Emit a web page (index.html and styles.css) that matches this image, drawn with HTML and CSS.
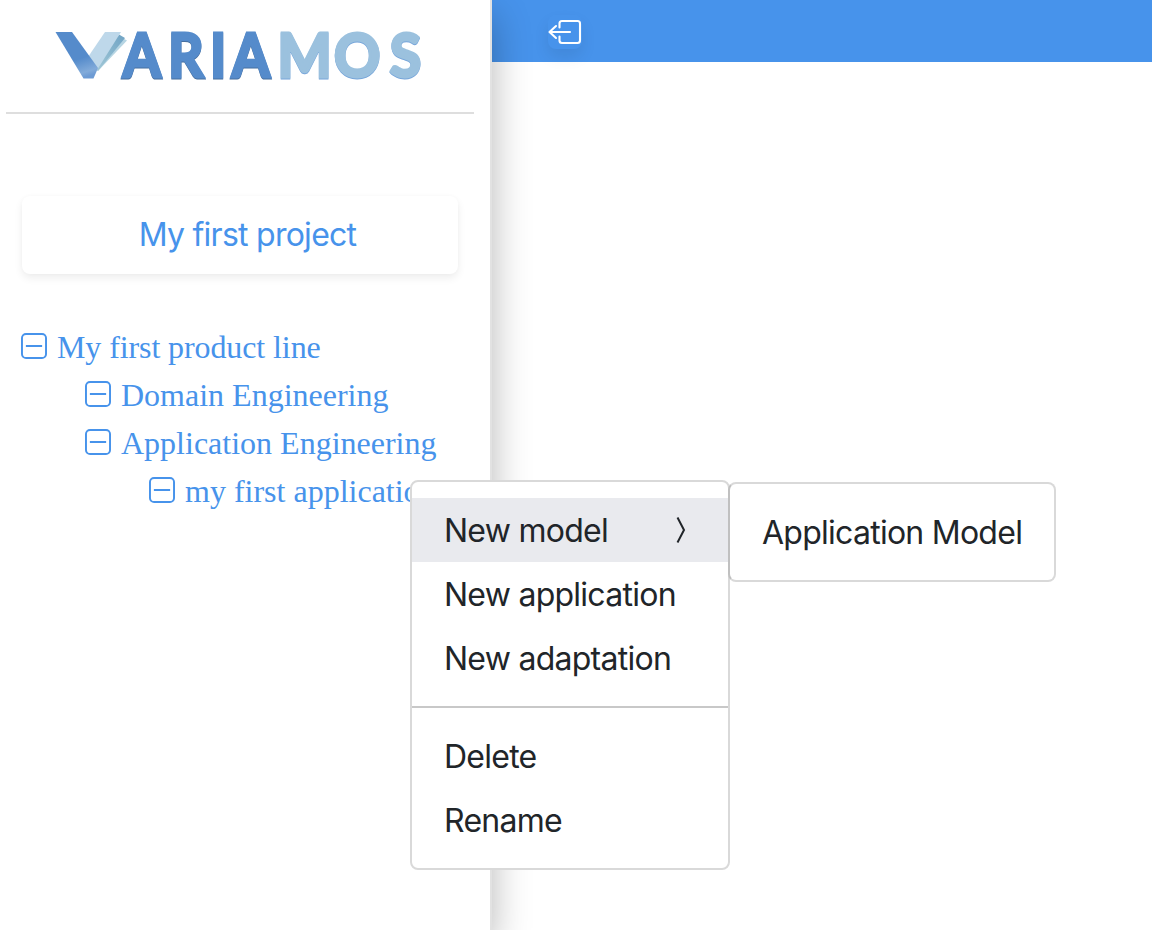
FILE: index.html
```html
<!DOCTYPE html>
<html lang="en">
<head>
<meta charset="utf-8">
<title>VariaMos</title>
<link rel="stylesheet" href="styles.css">
</head>
<body>
<div class="app">
  <aside class="sidebar">
    <div class="brand">
      <svg class="logo" width="380" height="80" viewBox="50 15 380 80" role="img" aria-label="VariaMos">
        <defs>
          <linearGradient id="stem" x1=".3" y1="0" x2=".6" y2="1">
            <stop offset=".6" stop-color="#558bcb"/>
            <stop offset=".9" stop-color="#82abda"/>
            <stop offset="1" stop-color="#6d9bd4"/>
          </linearGradient>
          <linearGradient id="fold" x1="1" y1="0" x2="0" y2="1">
            <stop offset="0" stop-color="#6fa3c4"/>
            <stop offset="1" stop-color="#a5cbd8"/>
          </linearGradient>
        </defs>
        <path d="M119 36L127 40.500L98 71L93 68Z" fill="#b6d5e3"/>
        <path d="M119 34.500L125 38L98 71L93 66Z" fill="url(#fold)"/>
        <path d="M105 32H121L97 70L88 57Z" fill="#bed8ea"/>
        <path d="M55.500 32H72L98 68L93.500 78.500H83.500Z" fill="url(#stem)"/>
        <g class="wordmark">
          <g transform="translate(122.800) scale(.9 1)">
            <text class="dark edge-dark" y="78" x="0 50.500 97 121">ARIA</text>
            <text class="dark" y="76.700" x="0 50.500 97 121" aria-hidden="true">ARIA</text>
          </g>
          <g transform="translate(277.500) scale(.94 1)">
            <text class="light edge-light" y="78" x="0 60 119.500">MOS</text>
            <text class="light" y="76.700" x="0 60 119.500" aria-hidden="true">MOS</text>
          </g>
        </g>
      </svg>
    </div>
    <div class="project">My first project</div>
    <ul class="tree">
      <li class="node root"><svg class="toggle" viewBox="0 0 16 16"><rect x=".6" y=".6" width="14.800" height="14.800" rx="2.500"/><path d="M3 8H13"/></svg><span>My first product line</span></li>
      <li class="node level-1"><svg class="toggle" viewBox="0 0 16 16"><rect x=".6" y=".6" width="14.800" height="14.800" rx="2.500"/><path d="M3 8H13"/></svg><span>Domain Engineering</span></li>
      <li class="node level-1"><svg class="toggle" viewBox="0 0 16 16"><rect x=".6" y=".6" width="14.800" height="14.800" rx="2.500"/><path d="M3 8H13"/></svg><span>Application Engineering</span></li>
      <li class="node level-2"><svg class="toggle" viewBox="0 0 16 16"><rect x=".6" y=".6" width="14.800" height="14.800" rx="2.500"/><path d="M3 8H13"/></svg><span>my first application</span></li>
    </ul>
  </aside>
  <main class="main">
    <header class="topbar">
      <span class="exit"><svg width="34" height="28" viewBox="0 0 34 28"><path d="M11.500 9.500V5.500Q11.500 3 14 3H29.500Q32 3 32 5.500V22.500Q32 25 29.500 25H14Q11.500 25 11.500 22.500V18.500M22 14H1.500M8 8L1.500 14L8 20"/></svg></span>
    </header>
  </main>
</div>
<nav class="menu">
  <div class="item active"><span>New model</span><svg class="chevron" width="10" height="28" viewBox="0 0 10 28"><path d="M1.500 1.500L8 14L1.500 26.500"/></svg></div>
  <div class="item"><span>New application</span></div>
  <div class="item"><span>New adaptation</span></div>
  <hr class="divider">
  <div class="item"><span>Delete</span></div>
  <div class="item"><span>Rename</span></div>
</nav>
<nav class="menu submenu">
  <div class="item"><span>Application Model</span></div>
</nav>
</body>
</html>
```

FILE: styles.css
```css
* { box-sizing: border-box; }
body {
  margin: 0;
  overflow: hidden;
  background: #fff;
  color: #212529;
  font-family: Inter, "Liberation Sans", sans-serif;
  font-size: 32px;
  letter-spacing: -.74px;
}
.app { display: flex; height: 930px; }
.sidebar {
  position: relative;
  z-index: 1;
  flex: none;
  width: 492px;
  background: #fff;
  border-right: 2px solid #e2e2e2;
  box-shadow: 0 16px 36px rgba(0, 0, 0, .29);
}
.main { flex: 1; }
.topbar {
  display: flex;
  align-items: center;
  height: 62px;
  padding-left: 56px;
  background: #4793eb;
}
.exit {
  display: flex;
  width: 34px;
  height: 34px;
  margin-top: 2px;
  align-items: center;
  border-radius: 8px;
  box-shadow: 0 8px 16px rgba(0, 0, 0, .08);
}
.exit svg { fill: none; stroke: #fff; stroke-width: 2.1; stroke-linecap: round; stroke-linejoin: round; }
.brand {
  height: 114px;
  width: 468px;
  margin-left: 6px;
  padding: 15px 0 0 44px;
  border-bottom: 2px solid #dedede;
}
.logo { display: block; overflow: visible; }
.wordmark { font-family: Lato, sans-serif; font-weight: 700; font-size: 61px; letter-spacing: 0; stroke-width: 3; }
.dark { fill: #558bcb; stroke: #558bcb; }
.edge-dark { fill: #476f9e; stroke: #476f9e; }
.light { fill: #9bc1de; stroke: #9bc1de; }
.edge-light { fill: #76a5da; stroke: #76a5da; }
.project {
  width: 436px;
  height: 78px;
  margin: 82px 0 0 22px;
  padding-left: 15px;
  border-radius: 8px;
  background: #fff;
  box-shadow: 0 4px 8px rgba(0, 0, 0, .07), 0 0 4px rgba(0, 0, 0, .02);
  color: #4793eb;
  line-height: 78px;
  text-align: center;
}
.tree {
  margin: 49px 0 0;
  padding: 0 0 0 21px;
  list-style: none;
  color: #4793eb;
  font-family: "Liberation Serif", serif;
  letter-spacing: 0;
  white-space: nowrap;
}
.node { display: flex; height: 48px; align-items: center; gap: 10px; }
.root { letter-spacing: -.1px; }
.level-1 { margin-left: 64px; }
.level-2 { margin-left: 128px; }
.toggle {
  width: 26px;
  height: 26px;
  margin-bottom: 2px;
  fill: none;
  stroke: currentColor;
  stroke-width: 1.2;
}
.menu {
  position: absolute;
  z-index: 2;
  left: 410px;
  top: 480px;
  width: 320px;
  padding: 16px 0;
  border: 2px solid #d9d9d9;
  border-radius: 8px;
  background: #fff;
}
.submenu { left: 728px; top: 482px; width: 328px; border-left-color: #c0c0c0; }
.item {
  display: flex;
  height: 64px;
  padding: 0 32px;
  align-items: center;
  justify-content: space-between;
  white-space: nowrap;
}
.item span { padding-top: 1px; }
.active { padding-right: 42px; background: #e9eaee; }
.chevron { fill: none; stroke: #212529; stroke-width: 2; }
.divider { margin: 16px 0; border: 0; border-top: 2px solid #c8c8c8; }
```
